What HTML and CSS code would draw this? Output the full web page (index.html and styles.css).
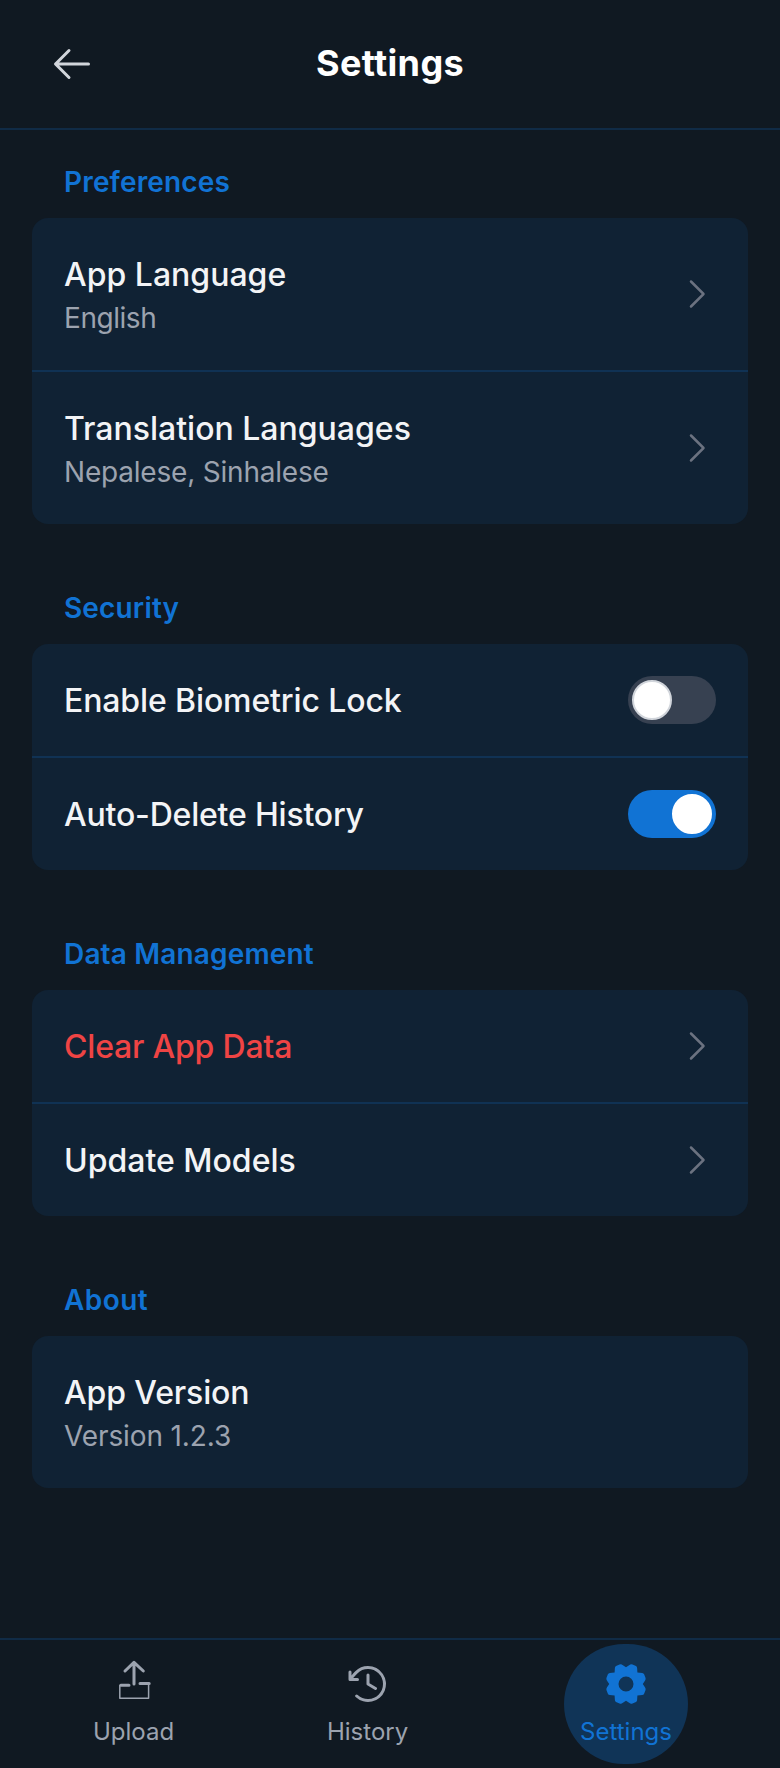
FILE: index.html
```html
<!DOCTYPE html>
<html lang="en">
<head>
<meta charset="utf-8">
<title>Settings</title>
<link rel="stylesheet" href="styles.css">
</head>
<body>
<svg width="0" height="0" class="defs">
  <symbol id="caret" viewBox="0 0 256 256"><path d="M181.66,133.66l-80,80a8,8,0,0,1-11.32-11.32L164.69,128,90.34,53.66a8,8,0,0,1,11.32-11.32l80,80A8,8,0,0,1,181.66,133.66Z"/></symbol>
</svg>
<div class="screen">
  <header class="header">
    <button class="back" aria-label="Back">
      <svg viewBox="0 0 256 256"><path d="M224,128a8,8,0,0,1-8,8H59.31l58.35,58.34a8,8,0,0,1-11.32,11.32l-72-72a8,8,0,0,1,0-11.32l72-72a8,8,0,0,1,11.32,11.32L59.31,120H216A8,8,0,0,1,224,128Z"/></svg>
    </button>
    <h1 class="title">Settings</h1>
  </header>
  <main class="main">
    <section>
      <h2 class="heading">Preferences</h2>
      <div class="card">
        <div class="row"><div><p class="label">App Language</p><p class="sub tighter">English</p></div><svg class="caret"><use href="#caret"/></svg></div>
        <div class="row"><div><p class="label">Translation Languages</p><p class="sub tight">Nepalese, Sinhalese</p></div><svg class="caret"><use href="#caret"/></svg></div>
      </div>
    </section>
    <section>
      <h2 class="heading">Security</h2>
      <div class="card">
        <div class="row"><p class="label snug">Enable Biometric Lock</p><span class="toggle"><span class="knob"></span></span></div>
        <div class="row"><p class="label tight">Auto-Delete History</p><span class="toggle on"><span class="knob"></span></span></div>
      </div>
    </section>
    <section>
      <h2 class="heading">Data Management</h2>
      <div class="card">
        <div class="row"><p class="label tight danger">Clear App Data</p><svg class="caret"><use href="#caret"/></svg></div>
        <div class="row"><p class="label">Update Models</p><svg class="caret"><use href="#caret"/></svg></div>
      </div>
    </section>
    <section>
      <h2 class="heading loose">About</h2>
      <div class="card">
        <div class="row"><div><p class="label snug">App Version</p><p class="sub snug">Version 1.2.3</p></div></div>
      </div>
    </section>
  </main>
  <nav class="nav">
    <a class="tab">
      <svg viewBox="0 0 48 48" class="upload"><path d="M24 24V3M15 11L24 2.3L33.3 11M10.8 25.2H19M30 23.6H39.2" stroke-width="3"/><path d="M9.8 25.5V38.3H38.6V24" stroke-width="1.5"/></svg>
      <span>Upload</span>
    </a>
    <a class="tab history">
      <svg viewBox="0 0 256 256"><path d="M136,80v43.47l36.12,21.67a8,8,0,0,1-8.24,13.72l-40-24A8,8,0,0,1,120,128V80a8,8,0,0,1,16,0Zm-8-48A95.44,95.44,0,0,0,60.08,60.15C52.81,67.51,46.35,74.59,40,82V64a8,8,0,0,0-16,0v40a8,8,0,0,0,8,8H72a8,8,0,0,0,0-16H49c7.15-8.42,14.27-16.35,22.39-24.57a80,80,0,1,1,1.66,114.75,8,8,0,1,0-11,11.64A96,96,0,1,0,128,32Z"/></svg>
      <span>History</span>
    </a>
    <a class="tab active">
      <svg viewBox="0 0 48 48"><path fill-rule="evenodd" d="M17.5 4.6Q19.2 3.9 20.5 4.9L24 7.2L27.5 4.9Q28.8 3.9 30.5 4.6L34 6Q34.9 6.5 35.1 7.8L35.4 12.6L40.2 12.9Q41.5 13.1 42 14L43.4 17.5Q44.1 19.2 43.1 20.5L40.8 24L43.1 27.5Q44.1 28.8 43.4 30.5L42 34Q41.5 34.9 40.2 35.1L35.4 35.4L35.1 40.2Q34.9 41.5 34 42L30.5 43.4Q28.8 44.1 27.5 43.1L24 40.8L20.5 43.1Q19.2 44.1 17.5 43.4L14 42Q13.1 41.5 12.9 40.2L12.6 35.4L7.8 35.1Q6.5 34.9 6 34L4.6 30.5Q3.9 28.8 4.9 27.5L7.2 24L4.9 20.5Q3.9 19.2 4.6 17.5L6 14Q6.5 13.1 7.8 12.9L12.6 12.6L12.9 7.8Q13.1 6.5 14 6ZM24 16.5A7.5 7.5 0 1 0 24 31.5A7.5 7.5 0 1 0 24 16.5Z"/></svg>
      <span>Settings</span>
    </a>
  </nav>
</div>
</body>
</html>
```
FILE: styles.css
```css
* { box-sizing: border-box; margin: 0; }
body { background: #101922; font-family: Inter, sans-serif; color: #f3f4f6; }
svg { display: block; fill: currentColor; flex: none; }
.defs { position: absolute; }
.screen { display: flex; flex-direction: column; height: 1768px; }
.header { display: flex; align-items: center; height: 130px; padding: 0 32px; border-bottom: 2px solid #102b46; }
.back { width: 80px; height: 80px; padding: 16px; border: 0; background: none; color: #d1d5db; }
.back svg { width: 48px; height: 48px; }
.title { flex: 1; padding: 0 80px 2px 0; text-align: center; font-size: 36px; line-height: 56px; font-weight: 700; letter-spacing: 0.35px; color: #fff; }
.main { flex: 1; display: flex; flex-direction: column; gap: 64px; padding: 32px; }
.heading { padding: 0 32px; margin-bottom: 16px; font-size: 28px; line-height: 40px; font-weight: 600; letter-spacing: 0.16px; color: #1173d4; }
.loose { letter-spacing: 0.45px; }
.card { overflow: hidden; border-radius: 16px; background: #102234; }
.row { display: flex; align-items: center; justify-content: space-between; padding: 32px; }
.row + .row { border-top: 2px solid #103254; }
.label { height: 48px; padding-top: 1px; font-size: 32px; line-height: 48px; font-weight: 500; }
.danger { color: #ef4444; }
.sub { font-size: 28px; line-height: 40px; color: #9ca3af; }
.snug { letter-spacing: -0.12px; }
.tight { letter-spacing: -0.2px; }
.tighter { letter-spacing: -0.45px; }
.caret { width: 40px; height: 40px; color: #6b7280; }
.toggle { display: flex; width: 88px; height: 48px; padding: 4px; border-radius: 24px; background: #374151; }
.knob { width: 40px; height: 40px; border: 2px solid #d1d5db; border-radius: 50%; background: #fff; }
.on { justify-content: flex-end; background: #1173d4; }
.on .knob { border-color: #fff; }
.nav { display: flex; align-items: center; justify-content: space-around; height: 130px; padding: 0 15px 0 16px; border-top: 2px solid #102b46; color: #9ca3af; }
.tab { display: flex; flex-direction: column; align-items: center; gap: 8px; font-size: 24px; line-height: 32px; }
.tab svg { width: 48px; height: 48px; }
.history { margin: 0 2px 0 -1px; }
.tab .upload { fill: none; stroke: currentColor; stroke-linecap: round; stroke-linejoin: round; }
.active { width: 124px; padding: 16px 0; border-radius: 9999px; background: #103457; color: #1173d4; }
```
